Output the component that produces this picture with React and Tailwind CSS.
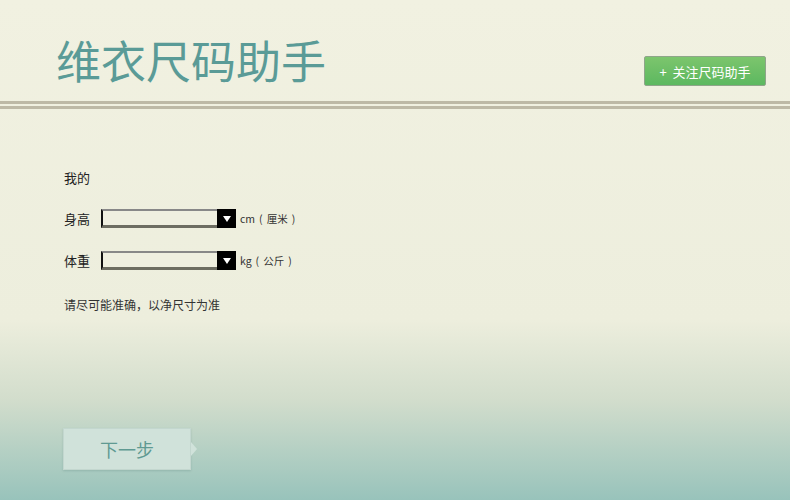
export default function App() {
  const font = { fontFamily: '"Noto Sans CJK SC", "Liberation Sans", sans-serif' }
  return (
    <div
      className="relative w-[790px] h-[500px] overflow-hidden bg-[linear-gradient(to_bottom,#f1f1e1_0px,#edeedd_320px,#d2ddcc_400px,#98c3bb_500px)]"
      style={font}
    >
      <header className="flex items-start justify-between h-[101px] pl-[56px] pr-[24px]">
        <h1 className="mt-[30px] text-[45px] leading-[60px] text-[#5a9b97] font-normal">维衣尺码助手</h1>
        <button className="mt-[56px] w-[122px] h-[30px] rounded-[2px] border border-[#8fa58a] bg-gradient-to-b from-[#7cc56d] to-[#5cb860] text-white text-[13px] leading-none">
          +&nbsp;&nbsp;关注尺码助手
        </button>
      </header>
      <div className="h-[3px] bg-[#bdb9a6]" />
      <div className="h-[2px]" />
      <div className="h-[3px] bg-[#bdb9a6]" />

      <main className="pl-[64px] pt-[60px] text-[#222] text-[13px]">
        <p className="leading-[18px]">我的</p>
        <Row label="身高" unit="厘米" pre="cm" className="mt-[22px]" />
        <Row label="体重" unit="公斤" pre="kg" className="mt-[23px]" />
        <p className="mt-[27px] text-[12px] text-[#333] leading-[16px]">请尽可能准确，以净尺寸为准</p>
      </main>

      <div className="absolute left-[63px] top-[428px] flex items-center">
        <button className="w-[128px] h-[42px] bg-[#d0e2da] border border-[#c3d7cf] shadow-[0_1px_2px_rgba(80,120,110,0.25)] text-[18px] text-[#5f9a92]">
          下一步
        </button>
        <div className="w-0 h-0 border-y-[7px] border-y-transparent border-l-[6px] border-l-[#d0e2da]" />
      </div>
    </div>
  )
}

function Row({ label, pre, unit, className }) {
  return (
    <div className={`flex items-center ${className}`}>
      <span className="w-[37px] leading-[18px]">{label}</span>
      <div className="flex h-[19px] w-[135px]">
        <div className="flex-1 border-t-2 border-l-2 border-b-[3px] border-t-[#888] border-l-[#111] border-b-[#6d6d62] bg-[#efefe0]" />
        <div className="w-[19px] bg-black flex items-center justify-center">
          <svg width="8" height="6" viewBox="0 0 8 6"><path d="M0 0h8L4 6z" fill="#fff" /></svg>
        </div>
      </div>
      <span className="ml-[4px] flex gap-[4px] text-[10.5px] text-[#333]">
        <span>{pre}</span>
        <span>(</span>
        <span>{unit}</span>
        <span>)</span>
      </span>
    </div>
  )
}
